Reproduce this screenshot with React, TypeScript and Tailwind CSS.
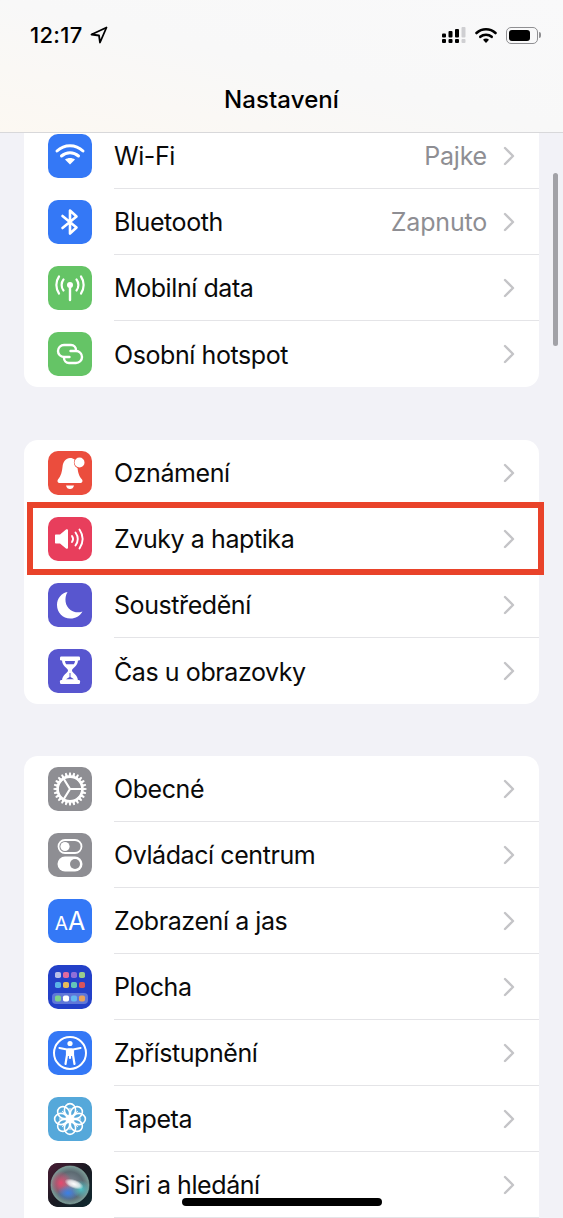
import React from "react";

const W = { fill: "white" };
const S = { fill: "none", stroke: "white", strokeLinecap: "round" as const, strokeLinejoin: "round" as const };

const Wifi = () => (
  <svg viewBox="0 0 44 44" className="w-11 h-11">
    <path d="M9 17C16.5 10 27.5 10 35 17" {...S} strokeWidth="3" />
    <path d="M13.5 22C18.5 17.6 25.5 17.6 30.5 22" {...S} strokeWidth="3" />
    <path d="M17 25.5C20 23.5 24 23.5 27 25.5L22 30.5Z" {...W} />
  </svg>
);
const Bt = () => (
  <svg viewBox="0 0 44 44" className="w-11 h-11">
    <path d="M14.5 16L28.5 27.5L22 33.5V10.5L28.5 16.5L14.5 28" {...S} strokeWidth="2.6" />
  </svg>
);
const Antenna = () => (
  <svg viewBox="0 0 44 44" className="w-11 h-11">
    <circle cx="22" cy="19" r="3" {...W} />
    <path d="M22 20V34" {...S} strokeWidth="2.4" />
    <path d="M15.5 13.5C13 16.5 13 21.5 15.5 24.5M28.5 13.5C31 16.5 31 21.5 28.5 24.5" {...S} strokeWidth="2.2" />
    <path d="M11 10.5C7.5 15.5 7.5 22.5 11 27.5M33 10.5C36.5 15.5 36.5 22.5 33 27.5" {...S} strokeWidth="2.2" />
  </svg>
);
const Hotspot = () => (
  <svg viewBox="0 0 44 44" className="w-11 h-11">
    <path d="M21.5 25H16C12.7 25 10 22.3 10 19C10 15.7 12.7 13 16 13H23C26 13 28 15.5 28 18" {...S} strokeWidth="2.4" />
    <path d="M22.5 19H28C31.3 19 34 21.7 34 25C34 28.3 31.3 31 28 31H21C18 31 16 28.5 16 26" {...S} strokeWidth="2.4" />
  </svg>
);
const Bell = () => (
  <svg viewBox="0 0 44 44" className="w-11 h-11">
    <path d="M22 7C24 7 25.5 7.6 26.7 8.5C25 11 26 15.5 29.5 17C30.2 22 31 25 34 28.5C35 30 34.5 32 32 32H12C9.5 32 9 30 10 28.5C13 25 14 21 14.5 16C15 10.5 18 7 22 7Z" {...W} />
    <path d="M18 34.5H26C25.5 37 24 38 22 38C20 38 18.5 37 18 34.5Z" {...W} />
    <circle cx="31.5" cy="11.5" r="5" {...W} />
  </svg>
);
const Speaker = () => (
  <svg viewBox="0 0 44 44" className="w-11 h-11">
    <path d="M8 17.5H12L18 12.5C19 11.8 20 12.3 20 13.5V30.5C20 31.7 19 32.2 18 31.5L12 26.5H8C7.3 26.5 7 26 7 25.5V18.5C7 18 7.3 17.5 8 17.5Z" {...W} />
    <path d="M24 19C25.3 20.8 25.3 23.2 24 25" {...S} strokeWidth="1.9" />
    <path d="M27.5 15.5C30.3 19.5 30.3 24.5 27.5 28.5" {...S} strokeWidth="1.9" />
    <path d="M31.5 12.5C35.5 18.5 35.5 25.5 31.5 31.5" {...S} strokeWidth="1.9" />
  </svg>
);
const Moon = () => (
  <svg viewBox="0 0 44 44" className="w-11 h-11">
    <path d="M19.5 9C16 15 17 23 22.5 27C26 29.5 30.5 30 34.5 28.5C32 33 27.5 35.5 22.5 35.5C14.5 35.5 9 29.5 9 22C9 15.5 13.5 10 19.5 9Z" {...W} />
  </svg>
);
const Hourglass = () => (
  <svg viewBox="0 0 44 44" className="w-11 h-11">
    <rect x="12" y="7.5" width="20" height="4" rx="1.2" {...W} />
    <rect x="12" y="31" width="20" height="4" rx="1.2" {...W} />
    <path d="M14 11C14 17.5 20 19 20 21.5C20 24 14 25.5 14 32H30C30 25.5 24 24 24 21.5C24 19 30 17.5 30 11Z" {...W} />
    <path d="M17 12H27C26.8 13.5 26.4 14.5 25.8 15.2H18.2C17.6 14.5 17.2 13.5 17 12Z" fill="#5856cf" />
    <path d="M21.5 24H22.5V28L26 30.2H18L21.5 28Z" fill="#5856cf" />
  </svg>
);
const Gear = () => {
  const teeth = Array.from({ length: 24 }, (_, i) => i * 15);
  return (
    <svg viewBox="0 0 44 44" className="w-11 h-11">
      {teeth.map((a) => (
        <path key={a} d="M20.4 10.5L21.2 5.5H22.8L23.6 10.5Z" fill="white" transform={`rotate(${a} 22 22)`} />
      ))}
      <circle cx="22" cy="22" r="12.4" fill="none" stroke="white" strokeWidth="2.6" />
      <path d="M22 22L15.5 11.5M22 22L15.5 32.5M22 22L34 22" {...S} strokeWidth="2.2" />
    </svg>
  );
};
const Toggles = () => (
  <svg viewBox="0 0 44 44" className="w-11 h-11">
    <rect x="10.5" y="7" width="23" height="13" rx="6.5" fill="none" stroke="white" strokeWidth="1.8" />
    <circle cx="17" cy="13.5" r="4.6" {...W} />
    <rect x="9.5" y="23.5" width="25" height="15" rx="7.5" {...W} />
    <circle cx="27" cy="31" r="5" fill="#8e8e93" />
  </svg>
);
const dots1 = ["#b9bfe8", "#e06a9e", "#8f6fd8", "#9ccb8c"];
const dots2 = ["#5bb3e8", "#e8b95c", "#63c5b8", "#d8545c"];
const dots3 = ["#7fd28a", "#ffffff", "#63b8f0", "#e8a35c"];
const Home = () => (
  <svg viewBox="0 0 44 44" className="w-11 h-11">
    {dots1.map((c, i) => <rect key={i} x={7 + i * 8} y="7" width="6" height="6" rx="1.8" fill={c} />)}
    {dots2.map((c, i) => <rect key={i} x={7 + i * 8} y="17" width="6" height="6" rx="1.8" fill={c} />)}
    <rect x="4" y="28" width="36" height="11" rx="4" fill="#5f77d8" />
    {dots3.map((c, i) => <rect key={i} x={7 + i * 8} y="30.5" width="6" height="6" rx="1.8" fill={c} />)}
  </svg>
);
const Access = () => (
  <svg viewBox="0 0 44 44" className="w-11 h-11">
    <circle cx="22" cy="22" r="16" fill="none" stroke="white" strokeWidth="2" />
    <circle cx="22" cy="12.5" r="2.6" {...W} />
    <path d="M11.5 17L19 18.5V24L17.5 33M32.5 17L25 18.5V24L26.5 33M19 18.5H25M22 25V27" {...S} strokeWidth="2.2" />
    <path d="M19.5 17.5H24.5V25H19.5Z" {...W} />
  </svg>
);
const Flower = () => {
  const a = [0, 45, 90, 135, 180, 225, 270, 315];
  return (
    <svg viewBox="0 0 44 44" className="w-11 h-11">
      {a.map((r) => (
        <ellipse key={r} cx="22" cy="13" rx="5.6" ry="6.4" fill="none" stroke="white" strokeWidth="1.6" transform={`rotate(${r} 22 22)`} />
      ))}
      {a.map((r) => (
        <path key={r} d="M22 22L22 11" stroke="white" strokeWidth="1" transform={`rotate(${r} 22 22)`} />
      ))}
      <circle cx="22" cy="22" r="3" {...W} />
    </svg>
  );
};
const Siri = () => (
  <svg viewBox="0 0 44 44" className="w-11 h-11">
    <defs>
      <linearGradient id="sbg" x1="0" y1="0" x2="1" y2="1">
        <stop offset="0%" stopColor="#4a1c34" />
        <stop offset="50%" stopColor="#1a1a22" />
        <stop offset="100%" stopColor="#0e2a30" />
      </linearGradient>
      <radialGradient id="sg" cx="50%" cy="50%" r="50%">
        <stop offset="0%" stopColor="#8a8f9c" />
        <stop offset="70%" stopColor="#5c6a72" />
        <stop offset="100%" stopColor="#7a9a96" />
      </radialGradient>
      <radialGradient id="sr" cx="50%" cy="50%" r="50%">
        <stop offset="0%" stopColor="#e8486e" />
        <stop offset="100%" stopColor="#e8486e" stopOpacity="0" />
      </radialGradient>
      <radialGradient id="sb" cx="50%" cy="50%" r="50%">
        <stop offset="0%" stopColor="#3a7fe8" />
        <stop offset="100%" stopColor="#3a7fe8" stopOpacity="0" />
      </radialGradient>
      <radialGradient id="st" cx="50%" cy="50%" r="50%">
        <stop offset="0%" stopColor="#4fc4c8" />
        <stop offset="100%" stopColor="#4fc4c8" stopOpacity="0" />
      </radialGradient>
      <radialGradient id="sw" cx="50%" cy="50%" r="50%">
        <stop offset="0%" stopColor="#ffffff" />
        <stop offset="60%" stopColor="#ffffff" stopOpacity="0.7" />
        <stop offset="100%" stopColor="#ffffff" stopOpacity="0" />
      </radialGradient>
    </defs>
    <rect width="44" height="44" fill="url(#sbg)" />
    <circle cx="22" cy="22" r="19" fill="url(#sg)" />
    <ellipse cx="13" cy="20" rx="11" ry="12" fill="url(#sr)" />
    <ellipse cx="20" cy="30" rx="11" ry="8" fill="url(#sb)" />
    <ellipse cx="33" cy="26" rx="9" ry="9" fill="url(#st)" />
    <ellipse cx="26" cy="21" rx="10" ry="4.5" fill="url(#sw)" transform="rotate(20 26 21)" />
    <circle cx="22" cy="22" r="19" fill="none" stroke="#8fb0a8" strokeOpacity="0.6" strokeWidth="1" />
  </svg>
);

type Item = { label: string; value?: string; bg: string; icon: React.ReactNode };

const g1: Item[] = [
  { label: "Wi-Fi", value: "Pajke", bg: "bg-[#3478f6]", icon: <Wifi /> },
  { label: "Bluetooth", value: "Zapnuto", bg: "bg-[#3478f6]", icon: <Bt /> },
  { label: "Mobilní data", bg: "bg-[#65c466]", icon: <Antenna /> },
  { label: "Osobní hotspot", bg: "bg-[#65c466]", icon: <Hotspot /> },
];
const g2: Item[] = [
  { label: "Oznámení", bg: "bg-[#eb4d3d]", icon: <Bell /> },
  { label: "Zvuky a haptika", bg: "bg-[#e83e5c]", icon: <Speaker /> },
  { label: "Soustředění", bg: "bg-[#5856cf]", icon: <Moon /> },
  { label: "Čas u obrazovky", bg: "bg-[#5856cf]", icon: <Hourglass /> },
];
const g3: Item[] = [
  { label: "Obecné", bg: "bg-[#8e8e93]", icon: <Gear /> },
  { label: "Ovládací centrum", bg: "bg-[#8e8e93]", icon: <Toggles /> },
  {
    label: "Zobrazení a jas",
    bg: "bg-[#3478f6]",
    icon: (
      <span className="flex items-baseline text-white font-normal leading-none">
        <span className="text-[19px]">A</span>
        <span className="text-[25px]">A</span>
      </span>
    ),
  },
  { label: "Plocha", bg: "bg-[#2340c8]", icon: <Home /> },
  { label: "Zpřístupnění", bg: "bg-[#3478f6]", icon: <Access /> },
  { label: "Tapeta", bg: "bg-[#55a8da]", icon: <Flower /> },
  { label: "Siri a hledání", bg: "bg-[#1c1c24]", icon: <Siri /> },
];

const Chevron = () => (
  <svg viewBox="0 0 12 20" className="w-3 h-5 ml-4 shrink-0">
    <path d="M2 2L10 10L2 18" fill="none" stroke="#c4c4c7" strokeWidth="2.4" strokeLinecap="round" strokeLinejoin="round" />
  </svg>
);

const Row = ({ item, divider }: { item: Item; divider: boolean }) => (
  <div className="flex items-center h-[66px] pl-6">
    <div className={`w-11 h-11 rounded-[10px] flex items-center justify-center shrink-0 overflow-hidden ${item.bg}`}>
      {item.icon}
    </div>
    <div className={`flex-1 h-full ml-[22px] pr-6 flex items-center ${divider ? "border-b border-[#e4e4e7]" : ""}`}>
      <span className="flex-1 pt-[3px] text-[25px] text-[#0a0a0a] tracking-[-0.42px]">{item.label}</span>
      {item.value && <span className="pt-[3px] text-[25px] text-[#8e8e93] tracking-[-0.2px]">{item.value}</span>}
      <Chevron />
    </div>
  </div>
);

const Card = ({ items, open = false, className = "" }: { items: Item[]; open?: boolean; className?: string }) => (
  <div className={`bg-white overflow-hidden ${className}`}>
    {items.map((it, i) => (
      <Row key={it.label} item={it} divider={open || i < items.length - 1} />
    ))}
  </div>
);

export default function App() {
  return (
    <div
      className="relative w-[563px] h-[1218px] overflow-hidden bg-[#f2f2f7] flex flex-col"
      style={{ fontFamily: "Inter, 'Noto Sans', sans-serif" }}
    >
      <header className="h-[133px] shrink-0 bg-gradient-to-tr from-[#fcf8f2] via-[#f8f8f8] to-[#f9f9fa] border-b border-[#d8d8da] z-10 relative">
        <div className="flex items-center justify-between h-[70px] pl-[30px] pr-[22px]">
          <div className="flex items-center gap-[7px]">
            <span className="text-[22px] font-medium text-black tracking-[0.3px]">12:17</span>
            <svg viewBox="0 0 18 18" className="w-[18px] h-[18px]">
              <path d="M16.5 1.5L1.5 8.5L9 9.5L10 16.5Z" fill="none" stroke="black" strokeWidth="1.8" strokeLinejoin="round" />
            </svg>
          </div>
          <div className="flex items-center gap-[9px]">
            <svg viewBox="0 0 24 17" className="w-6 h-[17px]">
              <g fill="black">
                <rect x="0" y="6.5" width="4" height="4" rx="1" />
                <rect x="0" y="12" width="4" height="4" rx="1" />
                <rect x="6.5" y="4" width="4" height="6.5" rx="1" />
                <rect x="6.5" y="12" width="4" height="4" rx="1" />
                <rect x="13" y="2" width="4" height="8.5" rx="1" />
                <rect x="13" y="12" width="4" height="4" rx="1" />
              </g>
              <g fill="#cfcfd2">
                <rect x="19.5" y="0" width="4" height="10.5" rx="1" />
                <rect x="19.5" y="12" width="4" height="4" rx="1" />
              </g>
            </svg>
            <svg viewBox="0 0 22 17" className="w-[22px] h-[17px]">
              <path d="M1.5 6C7 1 15 1 20.5 6" fill="none" stroke="black" strokeWidth="2.6" strokeLinecap="round" />
              <path d="M5.3 9.8C8.5 7 13.5 7 16.7 9.8" fill="none" stroke="black" strokeWidth="2.6" strokeLinecap="round" />
              <path d="M8 12.8C9.8 11.2 12.2 11.2 14 12.8L11 16Z" fill="black" />
            </svg>
            <div className="flex items-center">
              <div className="w-8 h-[17px] rounded-[5px] border border-[#8f8f92] p-[2px]">
                <div className="w-[21px] h-full rounded-[3px] bg-black" />
              </div>
              <div className="w-[2px] h-[6px] ml-[1px] rounded-r-sm bg-[#8f8f92]" />
            </div>
          </div>
        </div>
        <h1 className="text-center text-[24px] font-medium text-black leading-[30px] mt-[15px] tracking-[0.1px]">Nastavení</h1>
      </header>

      <main className="flex-1 overflow-hidden px-6 relative">
        <div className="-mt-[10px] flex flex-col">
          <Card items={g1} className="rounded-b-[14px]" />
          <Card items={g2} className="mt-[53px] rounded-[14px]" />
          <Card items={g3} open className="mt-[52px] rounded-t-[14px]" />
        </div>
      </main>

      <div className="absolute left-[553px] top-[173px] w-[5px] h-[173px] rounded-full bg-[#a2a2a7]" />
      <div className="absolute left-[27px] top-[502px] w-[517px] h-[73px] border-[6px] border-[#e9432a] z-20" />
      <div className="absolute left-[182px] top-[1198px] w-[200px] h-2 rounded-full bg-black z-20" />
    </div>
  );
}
